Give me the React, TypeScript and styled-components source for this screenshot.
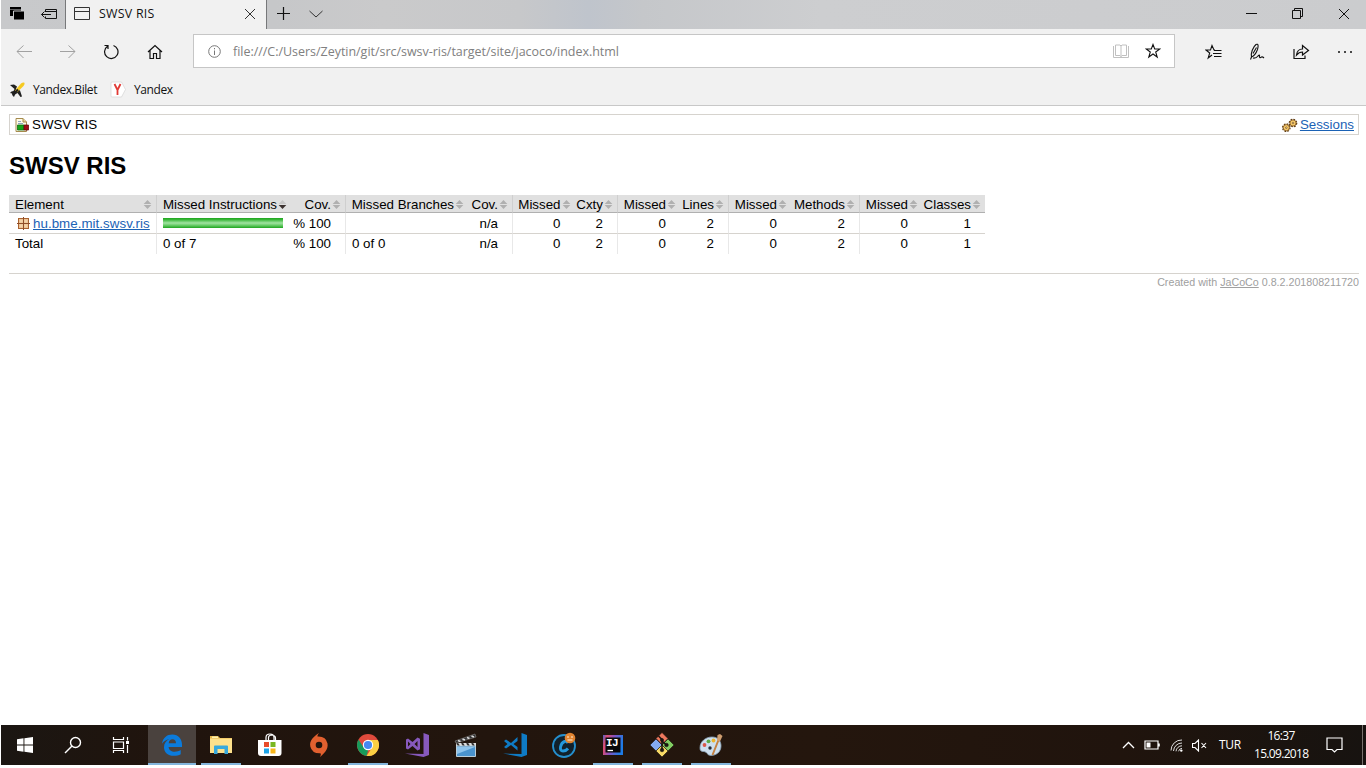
import React from 'react';
import styled, { createGlobalStyle } from 'styled-components';

const GlobalStyle = createGlobalStyle`
  * { box-sizing: border-box; }
  body { margin: 0; background: #fff; overflow: hidden; }
  svg { display: block; flex: none; }
`;

const ui = `'Open Sans', 'Noto Sans', sans-serif`;
const arial = `'Liberation Sans', Arial, sans-serif`;

const Screen = styled.div`
  width: 1366px;
  height: 768px;
  padding: 0 0 3px 1px;
  display: flex;
  flex-direction: column;
`;
const TitleBar = styled.div`
  height: 29px;
  flex: none;
  display: flex;
  align-items: stretch;
  background: linear-gradient(90deg, #c8c9cb 0, #c6c7c9 20%, #cacacb 28%, #c7c8ca 38%, #bfc4cc 43%, #c5c7ca 47%, #cdced0 60%, #cbccce 100%);
`;
const TabTools = styled.div`
  width: 65px;
  display: flex;
  align-items: center;
  padding: 0 8px 2px 8px;
  justify-content: space-between;
  border-right: 1px solid #77787a;
`;
const Tab = styled.div`
  width: 201px;
  display: flex;
  align-items: center;
  background: #f1f1f1;
  border-right: 1px solid #77787a;
  padding: 0 10px 2px 8px;
`;
const TabTitle = styled.span`
  font: 12.4px/16px ${ui};
  letter-spacing: 0.25px;
  color: #111;
  flex: 1;
  padding-left: 9px;
  white-space: nowrap;
`;
const TabActions = styled.div`
  display: flex;
  align-items: center;
  gap: 19px;
  padding: 0 0 2px 10px;
  flex: 1;
`;
const WindowButtons = styled.div`
  display: flex;
  align-items: center;
  gap: 35px;
  padding: 0 16px 2px 0;
`;
const Toolbar = styled.div`
  height: 45px;
  flex: none;
  background: #f1f1f1;
  display: flex;
  align-items: center;
  padding-right: 13px;
`;
const NavButtons = styled.div`
  display: flex;
  align-items: center;
  justify-content: space-between;
  width: 147px;
  margin: 0 30px 0 15px;
`;
const AddressBar = styled.div`
  width: 982px;
  height: 34px;
  margin-top: -1px;
  background: #fff;
  border: 1px solid #c6c6c6;
  display: flex;
  align-items: center;
  padding: 0 13px 0 14px;
`;
const Url = styled.span`
  font: 12.5px/18px ${ui};
  letter-spacing: -0.03px;
  color: #808080;
  flex: 1;
  padding: 1px 0 0 12px;
`;
const AddressActions = styled.div`
  display: flex;
  align-items: center;
  gap: 16px;
`;
const ToolActions = styled.div`
  flex: 1;
  display: flex;
  align-items: center;
  justify-content: space-between;
  padding-left: 30px;
`;
const FavoritesBar = styled.div`
  height: 32px;
  flex: none;
  background: #f1f1f1;
  border-bottom: 1px solid #c8c8c8;
  display: flex;
  align-items: center;
`;
const Favorite = styled.span<{ $w: number }>`
  display: flex;
  align-items: center;
  gap: 7px;
  width: ${(p) => p.$w}px;
  padding-left: 8px;
  margin-right: -8px;
  font: 12px/16px ${ui};
  letter-spacing: -0.42px;
  color: #111;
  white-space: nowrap;
`;
const FavoriteLabel = styled.span`
  padding-top: 1px;
`;
const Page = styled.main`
  flex: 1;
  padding: 8px 7px 0 8px;
  font: 13.33px/16px ${arial};
  color: #000;
`;
const Breadcrumb = styled.div`
  height: 21px;
  border: 1px solid #d6d3ce;
  display: flex;
  align-items: center;
  justify-content: space-between;
  padding: 1px 4px 0 5px;
`;
const Crumb = styled.span`
  display: flex;
  align-items: center;
  gap: 2px;
`;
const PackageCell = styled(Crumb)`
  padding-left: 2px;
  gap: 3px;
  letter-spacing: 0.04px;
`;
const Link = styled.a`
  color: #1b62b5;
  text-decoration: underline;
`;
const Heading = styled.h1`
  font: bold 24px/28px ${arial};
  margin: 17px 0 15px;
`;
const Coverage = styled.table`
  width: 976px;
  table-layout: fixed;
  border-collapse: separate;
  border-spacing: 0;
`;
const HeadCell = styled.th<{ $divided?: boolean; $first?: boolean }>`
  height: 18px;
  padding: 0 5px 0 ${(p) => (p.$divided || p.$first ? 6 : 0)}px;
  background: #e0e0e0;
  border-bottom: 1px solid #b0b0b0;
  border-left: ${(p) => (p.$divided ? '1px solid #cfcfcf' : '0')};
  font-weight: normal;
  white-space: nowrap;
`;
const HeadInner = styled.div<{ $spread?: boolean }>`
  display: flex;
  align-items: center;
  gap: 2px;
  height: 17px;
  padding-top: 1px;
  justify-content: ${(p) => (p.$spread ? 'space-between' : 'flex-end')};
`;
const HeadLabel = styled.span`
  padding-top: 2px;
`;
const Cell = styled.td<{ $divided?: boolean; $left?: boolean; $last?: boolean }>`
  height: ${(p) => (p.$last ? 20 : 21)}px;
  padding: ${(p) => (p.$last ? 0 : 1)}px ${(p) => (p.$left ? 0 : 14)}px 0 ${(p) => (p.$left ? 6 : 0)}px;
  text-align: ${(p) => (p.$left ? 'left' : 'right')};
  border-left: ${(p) => (p.$divided ? '1px solid #e8e8e8' : '0')};
  border-bottom: ${(p) => (p.$last ? '0' : '1px solid #d6d3ce')};
  white-space: nowrap;
`;
const Bar = styled.div`
  width: 120px;
  height: 10px;
  margin-bottom: 1px;
  background: linear-gradient(#1fa51f 0, #35b535 15%, #a2e3a2 50%, #6fd06f 70%, #1fa51f 100%);
`;
const Footer = styled.footer`
  margin-top: 19px;
  border-top: 1px solid #d6d3ce;
  padding-top: 2px;
  font-size: 10.7px;
  line-height: 13px;
  text-align: right;
  color: #a0a0a0;
`;
const FooterLink = styled.a`
  color: #a0a0a0;
  text-decoration: underline;
`;
const Taskbar = styled.div`
  height: 40px;
  flex: none;
  display: flex;
  background: linear-gradient(90deg, #1b1612 0, #20140d 12%, #24160d 60%, #20140d 82%, #171310 100%);
`;
const SystemItems = styled.div`
  display: flex;
  width: 147px;
`;
const AppItems = styled.div`
  display: flex;
  gap: 1px;
  flex: 1;
`;
const TaskItem = styled.div<{ $active?: boolean; $open?: boolean }>`
  width: 48px;
  height: 40px;
  display: flex;
  align-items: center;
  justify-content: center;
  position: relative;
  background: ${(p) => (p.$active ? '#4a423e' : 'transparent')};
  &::after {
    content: '';
    display: ${(p) => (p.$active || p.$open ? 'block' : 'none')};
    position: absolute;
    bottom: 0;
    height: 2px;
    left: ${(p) => (p.$active ? 0 : 4)}px;
    right: ${(p) => (p.$active ? 0 : 4)}px;
    background: #83b6dc;
  }
`;
const Tray = styled.div`
  display: flex;
  align-items: center;
  color: #fff;
  font: 12px/18px ${ui};
  letter-spacing: -0.3px;
  padding-right: 3px;
`;
const TrayIcons = styled.div`
  display: flex;
  align-items: center;
  gap: 9.4px;
`;
const Language = styled.span`
  width: 24px;
  margin-left: 12px;
`;
const Clock = styled.div`
  width: 54px;
  margin: 0 18px 0 11px;
  text-align: center;
  letter-spacing: -0.68px;
  white-space: nowrap;
`;
const DesktopEdge = styled.div`
  width: 1px;
  height: 40px;
  margin-left: 19px;
  background: #77716d;
`;

type GlyphProps = { w: number; h: number; color?: string; sw?: number; children: React.ReactNode };
const Glyph = ({ w, h, color = '#111', sw = 1, children }: GlyphProps) => (
  <svg width={w} height={h} viewBox={`0 0 ${w} ${h}`} fill="none" stroke={color} strokeWidth={sw}>
    {children}
  </svg>
);

const SortArrows = ({ down }: { down?: boolean }) => (
  <svg width="7" height="9" viewBox="0 0 7 9" overflow="visible">
    <path d="M-.3 4L3.5 0L7.300 4Z" fill={down ? '#c8c8c8' : '#b0b0b0'} />
    <path d="M-.3 5L3.5 9L7.300 5Z" fill={down ? '#3c3230' : '#b0b0b0'} />
  </svg>
);

const ReportIcon = () => (
  <svg width="15" height="14" viewBox="0 0 15 14">
    <path d="M1 .5H8L11.5 4V13.5H1Z" fill="#fffbe8" stroke="#a58a4c" />
    <path d="M8 .5V4H11.5" fill="#e8d79a" stroke="#a58a4c" />
    <path d="M3 3.5H6M3 5.5H8" stroke="#8fa6bd" />
    <path d="M2.500 7H9V12H2.500Z" fill="#18a418" stroke="#0b6d13" strokeWidth=".8" />
    <path d="M9 7H13.500V12H9Z" fill="#a00d17" stroke="#670a10" strokeWidth=".8" />
  </svg>
);

const SessionsIcon = () => (
  <svg width="16" height="15" viewBox="0 0 16 15">
    {[[4.3, 9.7], [11, 5]].map(([x, y]) => (
      <g key={x}>
        <circle cx={x} cy={y} r="3.700" fill="none" stroke="#5e3c14" strokeWidth="1.300" strokeDasharray="1.700 1.200" />
        <circle cx={x} cy={y} r="3.100" fill="#f6ca6b" stroke="#7b4e15" strokeWidth=".8" />
        <circle cx={x} cy={y} r=".8" fill="#fff" stroke="#71470f" strokeWidth=".7" />
      </g>
    ))}
  </svg>
);

const PackageIcon = () => (
  <svg width="13" height="13" viewBox="0 0 13 13">
    <rect x="1.500" y="1.500" width="10" height="10" fill="#efc596" stroke="#a8612f" />
    <path d="M3 3H5.500V5.500H3ZM7.500 3H10V5.500H7.500ZM3 7.500H5.500V10H3ZM7.500 7.500H10V10H7.500Z" fill="#f4d3a8" />
    <path d="M6.500 0V13M0 6.500H13" stroke="#8f4d27" />
  </svg>
);

const columns: { label: string; width: number; divided?: boolean; down?: boolean }[] = [
  { label: 'Element', width: 147 },
  { label: 'Missed Instructions', width: 135, divided: true, down: true },
  { label: 'Cov.', width: 54 },
  { label: 'Missed Branches', width: 123, divided: true },
  { label: 'Cov.', width: 44 },
  { label: 'Missed', width: 62.5, divided: true },
  { label: 'Cxty', width: 42.5 },
  { label: 'Missed', width: 63, divided: true },
  { label: 'Lines', width: 48 },
  { label: 'Missed', width: 63, divided: true },
  { label: 'Methods', width: 68 },
  { label: 'Missed', width: 63, divided: true },
  { label: 'Classes', width: 63 },
];
const packageRow: React.ReactNode[] = [
  <PackageCell key="p"><PackageIcon /><Link>hu.bme.mit.swsv.ris</Link></PackageCell>,
  <Bar key="b" />, '% 100', '', 'n/a', '0', '2', '0', '2', '0', '2', '0', '1',
];
const totalRow: React.ReactNode[] = ['Total', '0 of 7', '% 100', '0 of 0', 'n/a', '0', '2', '0', '2', '0', '2', '0', '1'];

const Row = ({ cells, last }: { cells: React.ReactNode[]; last?: boolean }) => (
  <tr>
    {cells.map((c, i) => (
      <Cell key={i} $divided={columns[i].divided} $left={i === 0 || i === 1 || i === 3} $last={last}>{c}</Cell>
    ))}
  </tr>
);

const Start = () => (
  <svg width="16" height="16" viewBox="0 0 16 16" fill="#fff">
    <path d="M0 2.2L6.5 1.3V7.5H0ZM7.4 1.2L16 0V7.5H7.4ZM0 8.5H6.5V14.7L0 13.8ZM7.4 8.5H16V16L7.4 14.8Z" />
  </svg>
);
const EdgeLogo = () => (
  <svg width="22" height="22" viewBox="0 0 22 22">
    <path fill="#0b7bdb" d="M1 9.8C1.8 3.8 6 .5 11.3.5C17.500.5 21 5 21 10.600V13H7.600C7.800 16.200 10.500 17.700 13.600 17.700C16 17.700 18 17 19.700 16V20.300C17.800 21.300 15.500 21.800 12.800 21.800C6.800 21.800 3 18.200 3 13.200C3 9.600 5 6.700 8.200 5.300C5.200 5.600 2.700 7.200 1 9.800ZM7.700 9.200H15C15 6.700 13.600 5.200 11.500 5.200C9.400 5.200 8 6.800 7.700 9.200Z" />
  </svg>
);
const Explorer = () => (
  <svg width="22" height="20" viewBox="0 0 22 20">
    <path d="M0 1H8L10 3H22V18H0Z" fill="#e7b84b" />
    <path d="M2 1.500H8V3H2Z" fill="#fff2ae" />
    <path d="M0 3.500H22V18H0Z" fill="#fde18c" />
    <path d="M4 19V11.500Q4 10.500 5 10.500H17Q18 10.500 18 11.500V19H14.500V14H7.500V19Z" fill="#37a9dd" />
  </svg>
);
const Store = () => (
  <svg width="24" height="24" viewBox="0 0 24 24">
    <path d="M8 8V4.500Q8 1 12 1Q16 1 16 4.500V8M10.500 7V4.500Q10.500 2.500 13 2Q17.500 2 17.500 5V7" fill="none" stroke="#fff" strokeWidth="1.200" />
    <path d="M0 7H23.500V20Q23.500 23 20.500 23H3Q0 23 0 20Z" fill="#fff" />
    <path d="M6 9H11V14H6Z" fill="#e84c2b" /><path d="M12.500 9H17.500V14H12.500Z" fill="#79b721" />
    <path d="M6 15.500H11V20.500H6Z" fill="#1ca3e8" /><path d="M12.500 15.500H17.500V20.500H12.500Z" fill="#f8b61b" />
  </svg>
);
const Origin = () => (
  <svg width="20" height="26" viewBox="0 0 20 26">
    <path fill="#e1602f" fillRule="evenodd" d="M10 1Q8 3 8.500 4.500Q17 4 18.500 11.500C19.500 17.500 15 21.500 11 25Q12.500 22.500 11.500 21.300Q3 21.700 1.300 14.500C.2 8.500 4.700 4.500 10 1ZM10 9.700A3.300 3.300 0 1 0 10 16.300A3.300 3.300 0 1 0 10 9.700Z" />
  </svg>
);
const Chrome = () => (
  <svg width="22" height="22" viewBox="0 0 22 22">
    <circle cx="11" cy="11" r="11" fill="#e04a3c" />
    <path d="M1.500 5.500L6.700 13.500L11.200 16L9.500 21.900A11 11 0 0 1 1.500 5.500Z" fill="#169b5b" />
    <path d="M11 6H20.800A11 11 0 0 1 9.500 21.900L15.500 13Z" fill="#fbcf43" />
    <circle cx="11" cy="11" r="5.200" fill="#fff" /><circle cx="11" cy="11" r="4.100" fill="#4688f1" />
  </svg>
);
const VisualStudio = ({ blue }: { blue?: boolean }) => (
  <svg width="24" height="24" viewBox="0 0 24 24" fill={blue ? '#0f7bc5' : '#8759bd'}>
    <path d="M18.500 0L24 2V22L18.500 24L0 20.500L18.500 21Z" />
    {blue
      ? <path d="M1 8L3 6.500L8 10L14.500 4V17.500L8 12L3 15.500L1 14L4.500 11ZM14.500 8L10.500 11L14.500 14Z" fillRule="evenodd" />
      : <path d="M1 6.500L3 5.500L7.500 9L12.500 4.500L15 5.800V16.200L12.500 17.500L7.500 13L3 16.500L1 15.500ZM3 8.500V13.500L5.500 11ZM12.500 8L9.500 11L12.500 14Z" fillRule="evenodd" />}
  </svg>
);
const Clapper = () => (
  <svg width="24" height="25" viewBox="0 0 24 25">
    <path d="M1 8L21 1L22 4L2 10Z" fill="#333" stroke="#888" strokeWidth=".6" />
    <path d="M4 7.500L6.500 8.500M8.500 6L11 7M13 4.500L15.500 5.500M17.500 3L20 4" stroke="#ddd" strokeWidth="1.700" />
    <path d="M2 10H22V13H2Z" fill="#ddd" /><path d="M3 10L5 13M8 10L10 13M13 10L15 13M18 10L20 13" stroke="#333" strokeWidth="2" />
    <path d="M2.500 13H21.500V23.500H2.500Z" fill="#4a93cd" stroke="#b9cdd9" /><path d="M3 14H21L3 21Z" fill="#8fc4eb" />
  </svg>
);
const CCleaner = () => (
  <svg width="26" height="26" viewBox="0 0 26 26">
    <circle cx="13" cy="14" r="11" fill="#11212c" stroke="#258fce" strokeWidth="1.800" />
    <path d="M17 11Q16 9 13.500 9.500Q10.500 10.500 9.500 15Q9 19 12 19Q15 19 17 16.500" fill="none" stroke="#2598dc" strokeWidth="2.900" />
    <circle cx="19" cy="6" r="5.300" fill="#e08330" />
    <path d="M16 5H18M20 5H22M16.500 8H21.500" stroke="#fff0d5" strokeWidth="1.200" fill="none" />
  </svg>
);
const Mono = styled.span`
  position: absolute;
  left: 17px;
  top: 12px;
  font: bold 11px/12px 'Liberation Mono', monospace;
  letter-spacing: -0.5px;
  color: #fff;
`;
const IntelliJ = () => (
  <>
    <svg width="20" height="20" viewBox="0 0 20 20">
      <defs><linearGradient id="ij" x2="1" y2=".3"><stop stopColor="#4a62c8" /><stop offset=".2" stopColor="#e04c70" /><stop offset=".55" stopColor="#8254c2" /><stop offset="1" stopColor="#1e7be5" /></linearGradient></defs>
      <path d="M0 0H20V20H0Z" fill="url(#ij)" /><path d="M2.500 2.500H17.500V17.500H2.500Z" fill="#090909" /><path d="M4.500 15.500H10" stroke="#fff" strokeWidth="1.300" />
    </svg>
    <Mono>IJ</Mono>
  </>
);
const GitLogo = () => (
  <svg width="26" height="26" viewBox="0 0 26 26" stroke="#17120d" strokeWidth=".6">
    <path d="M13 .5L19 6.500L13 12.500L7 6.500Z" fill="#ee795e" /><path d="M7 7L13 13L7 19L1 13Z" fill="#83aaf1" />
    <path d="M19 7L25 13L19 19L13 13Z" fill="#82ce62" /><path d="M13 13L19 19L13 25L7 19Z" fill="#f8da66" />
    <path d="M9.500 4L13 7.500V18M13 9L17.500 13" fill="none" stroke="#1a1612" strokeWidth="1.600" />
    <g fill="#1a1612"><circle cx="13" cy="8" r="1.600" /><circle cx="17.500" cy="13" r="1.800" /><circle cx="13" cy="18" r="1.800" /></g>
  </svg>
);
const Paint = () => (
  <svg width="26" height="25" viewBox="0 0 26 25">
    <path d="M2 15C2 8 8 4 14 4C20 4 23 8 23 13C23 19 18 22.500 13 22.500C9 22.500 9 18.500 6 18.500C3.500 18.500 2 18 2 15Z" fill="#cddfee" stroke="#8ba5ba" strokeWidth=".8" />
    <circle cx="6.500" cy="12" r="1.900" fill="#d9574a" /><circle cx="10.500" cy="8.300" r="1.900" fill="#5bab45" /><circle cx="15.500" cy="7.500" r="1.900" fill="#edb52e" /><circle cx="12" cy="15" r="1.700" fill="#252c35" />
    <path d="M14.500 22L20.500 7" stroke="#c58243" strokeWidth="2" /><path d="M19 7.500L19.500 2L22 1L24.500 3L22 8.500Z" fill="#cf9e70" />
  </svg>
);

const apps: { name: string; icon: React.ReactNode; active?: boolean; open?: boolean }[] = [
  { name: 'edge', icon: <EdgeLogo />, active: true },
  { name: 'explorer', icon: <Explorer />, open: true },
  { name: 'store', icon: <Store /> },
  { name: 'origin', icon: <Origin /> },
  { name: 'chrome', icon: <Chrome />, open: true },
  { name: 'vs', icon: <VisualStudio /> },
  { name: 'movie', icon: <Clapper /> },
  { name: 'code', icon: <VisualStudio blue /> },
  { name: 'cleaner', icon: <CCleaner /> },
  { name: 'idea', icon: <IntelliJ />, open: true },
  { name: 'git', icon: <GitLogo />, open: true },
  { name: 'paint', icon: <Paint />, open: true },
];

export default function App() {
  return (
    <Screen>
      <GlobalStyle />
      <TitleBar>
        <TabTools>
          <svg width="16" height="15" viewBox="0 0 16 15"><path d="M1 1H12V10H1Z" fill="#000" /><path d="M4.500 5H15.500V14H4.500Z" fill="#000" stroke="#c8c9cb" /><path d="M1 3.500H12" stroke="#c8c9cb" strokeWidth=".5" /></svg>
          <Glyph w={16} h={12}><path d="M4.500 4V1.500H15.500V10.500H4.500V8.500M4.500 3.500H15.500M.5 6.500H10M3.500 3.500L.5 6.500L3.500 9.500" /></Glyph>
        </TabTools>
        <Tab>
          <Glyph w={16} h={14} color="#333"><path d="M.5 .5H15.500V12.500H.5ZM.5 4.500H15.500" /></Glyph>
          <TabTitle>SWSV RIS</TabTitle>
          <Glyph w={12} h={12} color="#333"><path d="M1 1L11 11M11 1L1 11" /></Glyph>
        </Tab>
        <TabActions>
          <Glyph w={13} h={13} sw={1.2}><path d="M6.500 0V13M0 6.500H13" /></Glyph>
          <Glyph w={14} h={8} color="#333"><path d="M.5 1L7 7L13.500 1" /></Glyph>
        </TabActions>
        <WindowButtons>
          <Glyph w={11} h={11}><path d="M0 5.500H11" /></Glyph>
          <Glyph w={11} h={11}><path d="M.5 2.500H8.500V10.500H.5ZM2.500 2.500V.5H10.500V8.500H8.500" /></Glyph>
          <Glyph w={12} h={12}><path d="M1 1L11 11M11 1L1 11" /></Glyph>
        </WindowButtons>
      </TitleBar>
      <Toolbar>
        <NavButtons>
          <Glyph w={16} h={14} color="#a1a1a1"><path d="M16 6.500H1M7.500.5L1 6.500L7.500 13" /></Glyph>
          <Glyph w={16} h={14} color="#a1a1a1"><path d="M0 6.500H15M8.500.5L15 6.500L8.500 13" /></Glyph>
          <Glyph w={16} h={16} sw={1.2}><path d="M4.500 2.300A6.700 6.700 0 1 0 10.500 1.500M1.500 1.500H5V5" /></Glyph>
          <Glyph w={16} h={16} sw={1.2}><path d="M1 8L8 1.500L15 8M3 6.500V14.500H6.500V9.500H9.500V14.500H13V6.500" /></Glyph>
        </NavButtons>
        <AddressBar>
          <Glyph w={13} h={13} color="#777"><circle cx="6.500" cy="6.500" r="5.800" /><path d="M6.500 5.500V10M6.500 3V4.300" /></Glyph>
          <Url>file:///C:/Users/Zeytin/git/src/swsv-ris/target/site/jacoco/index.html</Url>
          <AddressActions>
            <Glyph w={16} h={15} color="#c0c0c0"><path d="M.5 2V13.500H15.500V2M2.500 1V11.500H7L8 12.500L9 11.500H13.500V1H9L8 2L7 1ZM8 2V13" /></Glyph>
            <Glyph w={16} h={16} sw={1.1}><path d="M8 1.500L9.700 6H14.800L10.700 9L12.200 14L8 11L3.800 14L5.300 9L1.200 6H6.300Z" /></Glyph>
          </AddressActions>
        </AddressBar>
        <ToolActions>
          <Glyph w={17} h={16} sw={1.1}><path d="M10 6H9L7 1.500L5.500 6H1L4.700 9L3.200 14L7 11M9 6.500H16.500M8 9.500H16.500M9 12.500H16.500" /></Glyph>
          <Glyph w={16} h={17} sw={1.1}><path d="M2.500 14L1.500 16.500M2.500 14C1.500 10 4 4 7 1.500C9.500.5 9.500 3 8.500 6.500C7 10.500 5 13 2.500 14M4 10.500L7.500 4.500M4 15Q7 15.500 9 13Q11 11 10.500 13.500Q10.500 15.500 12.500 14Q13.500 13.500 15 15" /></Glyph>
          <Glyph w={17} h={16} sw={1.2}><path d="M1 5V14.500H12V11.500M3.500 11C4 7 6.500 5 9.500 5V1.500L15.500 6.500L9.500 11V8Q6 8 3.500 11Z" /></Glyph>
          <Glyph w={16} h={4}><path d="M1 2H3M7 2H9M13 2H15" strokeWidth="1.600" /></Glyph>
        </ToolActions>
      </Toolbar>
      <FavoritesBar>
        <Favorite $w={109}>
          <svg width="17" height="16" viewBox="0 0 17 16"><path d="M1 3L5 2.500L8 4.500L7 7L11 8.500L13 14.500L11.500 15L8.500 11L6 12.500L5 15L3.500 13.500L3 11.500L1 11L2.500 9.500L4.500 9L5.500 7Z" fill="#202020" /><path d="M6 8.500L12 1.500Q14 0 15.500 .8Q16 2.300 14.500 4L8 10.500Z" fill="#f6ca21" /><path d="M4 13L9 7.500" stroke="#202020" strokeWidth="2" /></svg>
          <FavoriteLabel>Yandex.Bilet</FavoriteLabel>
        </Favorite>
        <Favorite $w={88}>
          <svg width="17" height="17" viewBox="0 0 17 17"><path d="M2 1H11.500L15.500 8.500L11.500 16H2Q1 16 1 15V2Q1 1 2 1Z" fill="#fff" stroke="#d4d4d4" strokeWidth=".7" /><path d="M4.500 3L7.500 9V14M10.500 3L7.500 9" fill="none" stroke="#e13a35" strokeWidth="1.800" /></svg>
          <FavoriteLabel>Yandex</FavoriteLabel>
        </Favorite>
      </FavoritesBar>
      <Page>
        <Breadcrumb>
          <Crumb><ReportIcon />SWSV RIS</Crumb>
          <Crumb><SessionsIcon /><Link>Sessions</Link></Crumb>
        </Breadcrumb>
        <Heading>SWSV RIS</Heading>
        <Coverage>
          <colgroup>{columns.map((c, i) => <col key={i} width={c.width} />)}</colgroup>
          <thead>
            <tr>
              {columns.map((c, i) => (
                <HeadCell key={i} $divided={c.divided} $first={i === 0}>
                  <HeadInner $spread={i === 0}><HeadLabel>{c.label}</HeadLabel><SortArrows down={c.down} /></HeadInner>
                </HeadCell>
              ))}
            </tr>
          </thead>
          <tbody>
            <Row cells={packageRow} />
            <Row cells={totalRow} last />
          </tbody>
        </Coverage>
        <Footer>Created with <FooterLink>JaCoCo</FooterLink> 0.8.2.201808211720</Footer>
      </Page>
      <Taskbar>
        <SystemItems>
          <TaskItem><Start /></TaskItem>
          <TaskItem><Glyph w={18} h={18} color="#fff" sw={1.4}><circle cx="11.500" cy="6.500" r="5" /><path d="M8 10L1 17" /></Glyph></TaskItem>
          <TaskItem><Glyph w={18} h={16} color="#fff" sw={1.2}><path d="M1.500 0V2.500H11.500V0M1.500 5H11.500V11.500H1.500ZM1.500 16V13.500H11.500V16M15.500 0V3.500M15.500 8V16" /><path d="M14 4H17V7H14Z" fill="#fff" stroke="none" /></Glyph></TaskItem>
        </SystemItems>
        <AppItems>
          {apps.map((a) => <TaskItem key={a.name} $active={a.active} $open={a.open}>{a.icon}</TaskItem>)}
        </AppItems>
        <Tray>
          <TrayIcons>
            <Glyph w={13} h={8} color="#fff" sw={1.3}><path d="M1 7L6.500 1.500L12 7" /></Glyph>
            <Glyph w={16} h={10} color="#fff" sw={1.2}><path d="M1 1H14V9H1ZM15.200 3.500V6.500" /><path d="M2.500 2.500H6.500V7.500H2.500Z" fill="#fff" stroke="none" /></Glyph>
            <Glyph w={13} h={13} color="#ddd"><path d="M1 11.500A10.500 10.500 0 0 1 12 1M3.500 12A8.500 8.500 0 0 1 12 4M6 12.300A6 6 0 0 1 12 6.800M8.500 12.300A4 4 0 0 1 12 9.300" /><circle cx="11.300" cy="11.600" r="1.200" fill="#fff" stroke="none" /></Glyph>
            <Glyph w={15} h={13} color="#fff" sw={1.1}><path d="M.5 4.500H3L6.500 1V12L3 8.500H.5ZM9.500 4L14 9M14 4L9.500 9" /></Glyph>
          </TrayIcons>
          <Language>TUR</Language>
          <Clock>16:37<br />15.09.2018</Clock>
          <Glyph w={17} h={16} color="#fff" sw={1.2}><path d="M1 1H16V12.500H11L8.500 15L6 12.500H1Z" /></Glyph>
          <DesktopEdge />
        </Tray>
      </Taskbar>
    </Screen>
  );
}
